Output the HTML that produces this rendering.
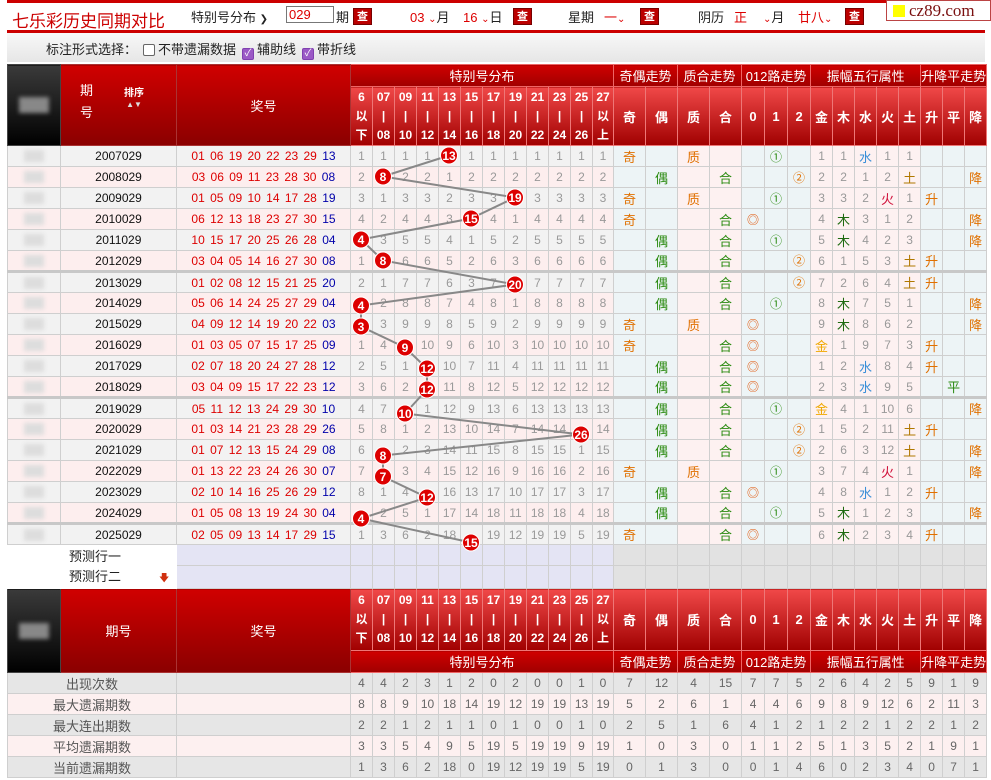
<!DOCTYPE html>
<html><head><meta charset="utf-8">
<style>
*{box-sizing:border-box}
body{margin:0;width:991px;height:780px;overflow:hidden;background:#fff;font-family:"Liberation Sans","Noto Sans CJK SC",sans-serif;font-size:12px;position:relative}
.topline{position:absolute;left:7px;top:0;width:978px;height:3px;background:#c00}
.title{position:absolute;left:12px;top:7px;font-size:17px;color:#c00;font-family:"Liberation Sans","Noto Sans CJK SC",sans-serif}
.redbar{position:absolute;left:7px;top:30px;width:978px;height:3px;background:#c00}
.opt{position:absolute;left:7px;top:33px;width:978px;height:29px;background:linear-gradient(#f8f8f8,#e6e6e6);font-size:13px;color:#222}
.ctl{position:absolute;top:7px;font-size:13px;color:#222;white-space:nowrap}
.red{color:#d00}
.btn{position:absolute;top:8px;width:19px;height:17px;background:#b00;color:#fff;font-size:11px;text-align:center;line-height:17px;font-weight:bold;border:1px solid #700}
.inp{position:absolute;left:286px;top:6px;width:48px;height:17px;border:1px solid #777;color:#d00;font-size:13px;padding-left:2px;line-height:15px}
.logo{position:absolute;left:886px;top:0;width:105px;height:21px;border:1px solid #b44;background:#fff;font-family:"Liberation Serif",serif;font-size:17px;color:#7a1010;line-height:19px;padding-left:22px}
.logo i{position:absolute;left:6px;top:4px;width:12px;height:12px;background:#ff0}
.cb{display:inline-block;width:12px;height:12px;border:1px solid #666;border-radius:2px;vertical-align:-2px;margin:0 3px 0 6px;background:#fff}
.cb.on{background:#9b59c6;border-color:#8040b0;color:#fff;font-size:10px;line-height:10px;text-align:center}
table{position:absolute;left:7px;border-collapse:collapse;table-layout:fixed;width:978px}
td{border:1px solid #cfcfcf;padding:0;text-align:center;white-space:nowrap;overflow:hidden;height:21px;color:#999}
.hd{background:linear-gradient(#d00000,#8a0000);color:#fff;font-size:13px;border-color:#a33}
.blk{background:linear-gradient(#3a3a3a,#000);border-color:#444}
.blk i{display:block;width:30px;height:16px;margin:0 auto;background:#888;filter:blur(2px)}
.g{background:linear-gradient(#d00000,#a00000);color:#fff;font-size:13px;border-color:#e66;height:22px}
.lb{background:linear-gradient(#f04848,#a00000);color:#fff;font-weight:bold;font-size:12px;border-color:#e77;line-height:19px}
.lb2{background:linear-gradient(#f04848,#a00000);color:#fff;font-weight:bold;font-size:13px;border-color:#e77}
tr.o td{background:#f2f2f2}
tr.e td{background:#fdeeee}
tr.o td.b,tr.e td.b{background:#edf4f6}
tr.o td.p,tr.e td.p{background:#fdf1f1}
td.L i{display:block;width:20px;height:12px;margin:0 auto;background:#ddd;filter:blur(2px)}
td.n{color:#111}
td.z{color:#d00;word-spacing:2px}
td.z b{font-weight:normal;color:#00a}
tr.s td{border-top:3px solid #c8c8c8}
.q{color:#e07000;font-size:13px}
.ou{color:#2a8a10;font-size:13px}
.c1{color:#2a8a10}
.c2{color:#e07000}
.c0{color:#e05000}
.jin{color:#f0a800;font-size:13px}
.mu{color:#1e6a10;font-size:13px}
.shui{color:#3a8fd8;font-size:13px}
.huo{color:#d0103a;font-size:13px}
.tu{color:#b07800;font-size:13px}
.sh{color:#e07000;font-size:13px}
.pi{color:#2a8a10;font-size:13px}
tr.pr td{background:#e4e4f4}
tr.pr td.w{background:#fff;border-color:#fff;text-align:left;padding-left:61px;color:#222;font-size:13px}
tr.pr td.gy{background:#e2e2e2}
tr.st td{color:#666}
tr.st td.t{font-size:13px;color:#555}
tr.s1 td{background:#e6e6e6}
tr.s2 td{background:#fdf0f0}
</style></head><body>
<div class="topline"></div>
<div class="title">七乐彩历史同期对比</div>
<div class="ctl" style="left:191px">特别号分布 <span style="font-size:10px">&#10095;</span></div>
<div class="inp">029</div>
<div class="ctl" style="left:336px">期</div>
<div class="btn" style="left:353px">查</div>
<div class="ctl red" style="left:410px">03 <span style="font-size:10px">&#8964;</span><span style="color:#222">月</span></div>
<div class="ctl red" style="left:463px">16 <span style="font-size:10px">&#8964;</span><span style="color:#222">日</span></div>
<div class="btn" style="left:513px">查</div>
<div class="ctl" style="left:568px">星期</div>
<div class="ctl red" style="left:604px">一<span style="font-size:10px">&#8964;</span></div>
<div class="btn" style="left:640px">查</div>
<div class="ctl" style="left:698px">阴历</div>
<div class="ctl red" style="left:734px">正</div>
<div class="ctl" style="left:763px"><span class="red" style="font-size:10px">&#8964;</span>月</div>
<div class="ctl red" style="left:798px">廿八<span style="font-size:10px">&#8964;</span></div>
<div class="btn" style="left:845px">查</div>
<div class="logo"><i></i>cz89.com</div>
<div class="redbar"></div>
<div class="opt"><div style="position:absolute;left:39px;top:6px">标注形式选择：<span class="cb"></span>不带遗漏数据<span class="cb on">&#10003;</span>辅助线<span class="cb on">&#10003;</span>带折线</div></div>

<table style="top:64px">
<colgroup><col style="width:53px"><col style="width:116px"><col style="width:174px"><col style="width:22px"><col style="width:22px"><col style="width:22px"><col style="width:22px"><col style="width:22px"><col style="width:22px"><col style="width:22px"><col style="width:22px"><col style="width:22px"><col style="width:22px"><col style="width:22px"><col style="width:21px"><col style="width:32px"><col style="width:32px"><col style="width:32px"><col style="width:32px"><col style="width:23px"><col style="width:23px"><col style="width:23px"><col style="width:22px"><col style="width:22px"><col style="width:22px"><col style="width:22px"><col style="width:22px"><col style="width:22px"><col style="width:22px"><col style="width:22px"></colgroup>
<tr><td rowspan="2" class="blk"><i></i></td><td rowspan="2" class="hd"><div style="position:relative;height:50px"><span style="position:absolute;left:19px;top:0;line-height:22px">期<br>号</span><span style="position:absolute;left:63px;top:4px;font-size:10px;font-weight:bold">排序<br><span style="font-size:8px;color:#ddd">&#9650;&#9660;</span></span></div></td><td rowspan="2" class="hd">奖号</td><td colspan="12" class="g">特别号分布</td><td colspan="2" class="g">奇偶走势</td><td colspan="2" class="g">质合走势</td><td colspan="3" class="g">012路走势</td><td colspan="5" class="g">振幅五行属性</td><td colspan="3" class="g">升降平走势</td></tr>
<tr style="height:59px"><td class="lb">6<br>以<br>下</td><td class="lb">07<br>|<br>08</td><td class="lb">09<br>|<br>10</td><td class="lb">11<br>|<br>12</td><td class="lb">13<br>|<br>14</td><td class="lb">15<br>|<br>16</td><td class="lb">17<br>|<br>18</td><td class="lb">19<br>|<br>20</td><td class="lb">21<br>|<br>22</td><td class="lb">23<br>|<br>24</td><td class="lb">25<br>|<br>26</td><td class="lb">27<br>以<br>上</td><td class="lb2">奇</td><td class="lb2">偶</td><td class="lb2">质</td><td class="lb2">合</td><td class="lb2">0</td><td class="lb2">1</td><td class="lb2">2</td><td class="lb2">金</td><td class="lb2">木</td><td class="lb2">水</td><td class="lb2">火</td><td class="lb2">土</td><td class="lb2">升</td><td class="lb2">平</td><td class="lb2">降</td></tr>

<tr class="o"><td class="L"><i></i></td><td class="n">2007029</td><td class="z">01 06 19 20 22 23 29 <b>13</b></td><td>1</td><td>1</td><td>1</td><td>1</td><td></td><td>1</td><td>1</td><td>1</td><td>1</td><td>1</td><td>1</td><td>1</td><td class="b q">奇</td><td class="b"></td><td class="p q">质</td><td class="p"></td><td class="b"></td><td class="b c1">①</td><td class="b"></td><td class="p">1</td><td class="p">1</td><td class="p shui">水</td><td class="p">1</td><td class="p">1</td><td class="b"></td><td class="b"></td><td class="b"></td></tr>
<tr class="e"><td class="L"><i></i></td><td class="n">2008029</td><td class="z">03 06 09 11 23 28 30 <b>08</b></td><td>2</td><td></td><td>2</td><td>2</td><td>1</td><td>2</td><td>2</td><td>2</td><td>2</td><td>2</td><td>2</td><td>2</td><td class="b"></td><td class="b ou">偶</td><td class="p"></td><td class="p ou">合</td><td class="b"></td><td class="b"></td><td class="b c2">②</td><td class="p">2</td><td class="p">2</td><td class="p">1</td><td class="p">2</td><td class="p tu">土</td><td class="b"></td><td class="b"></td><td class="b sh">降</td></tr>
<tr class="o"><td class="L"><i></i></td><td class="n">2009029</td><td class="z">01 05 09 10 14 17 28 <b>19</b></td><td>3</td><td>1</td><td>3</td><td>3</td><td>2</td><td>3</td><td>3</td><td></td><td>3</td><td>3</td><td>3</td><td>3</td><td class="b q">奇</td><td class="b"></td><td class="p q">质</td><td class="p"></td><td class="b"></td><td class="b c1">①</td><td class="b"></td><td class="p">3</td><td class="p">3</td><td class="p">2</td><td class="p huo">火</td><td class="p">1</td><td class="b sh">升</td><td class="b"></td><td class="b"></td></tr>
<tr class="e"><td class="L"><i></i></td><td class="n">2010029</td><td class="z">06 12 13 18 23 27 30 <b>15</b></td><td>4</td><td>2</td><td>4</td><td>4</td><td>3</td><td></td><td>4</td><td>1</td><td>4</td><td>4</td><td>4</td><td>4</td><td class="b q">奇</td><td class="b"></td><td class="p"></td><td class="p ou">合</td><td class="b c0">◎</td><td class="b"></td><td class="b"></td><td class="p">4</td><td class="p mu">木</td><td class="p">3</td><td class="p">1</td><td class="p">2</td><td class="b"></td><td class="b"></td><td class="b sh">降</td></tr>
<tr class="o"><td class="L"><i></i></td><td class="n">2011029</td><td class="z">10 15 17 20 25 26 28 <b>04</b></td><td></td><td>3</td><td>5</td><td>5</td><td>4</td><td>1</td><td>5</td><td>2</td><td>5</td><td>5</td><td>5</td><td>5</td><td class="b"></td><td class="b ou">偶</td><td class="p"></td><td class="p ou">合</td><td class="b"></td><td class="b c1">①</td><td class="b"></td><td class="p">5</td><td class="p mu">木</td><td class="p">4</td><td class="p">2</td><td class="p">3</td><td class="b"></td><td class="b"></td><td class="b sh">降</td></tr>
<tr class="e"><td class="L"><i></i></td><td class="n">2012029</td><td class="z">03 04 05 14 16 27 30 <b>08</b></td><td>1</td><td></td><td>6</td><td>6</td><td>5</td><td>2</td><td>6</td><td>3</td><td>6</td><td>6</td><td>6</td><td>6</td><td class="b"></td><td class="b ou">偶</td><td class="p"></td><td class="p ou">合</td><td class="b"></td><td class="b"></td><td class="b c2">②</td><td class="p">6</td><td class="p">1</td><td class="p">5</td><td class="p">3</td><td class="p tu">土</td><td class="b sh">升</td><td class="b"></td><td class="b"></td></tr>
<tr class="o s"><td class="L"><i></i></td><td class="n">2013029</td><td class="z">01 02 08 12 15 21 25 <b>20</b></td><td>2</td><td>1</td><td>7</td><td>7</td><td>6</td><td>3</td><td>7</td><td></td><td>7</td><td>7</td><td>7</td><td>7</td><td class="b"></td><td class="b ou">偶</td><td class="p"></td><td class="p ou">合</td><td class="b"></td><td class="b"></td><td class="b c2">②</td><td class="p">7</td><td class="p">2</td><td class="p">6</td><td class="p">4</td><td class="p tu">土</td><td class="b sh">升</td><td class="b"></td><td class="b"></td></tr>
<tr class="e"><td class="L"><i></i></td><td class="n">2014029</td><td class="z">05 06 14 24 25 27 29 <b>04</b></td><td></td><td>2</td><td>8</td><td>8</td><td>7</td><td>4</td><td>8</td><td>1</td><td>8</td><td>8</td><td>8</td><td>8</td><td class="b"></td><td class="b ou">偶</td><td class="p"></td><td class="p ou">合</td><td class="b"></td><td class="b c1">①</td><td class="b"></td><td class="p">8</td><td class="p mu">木</td><td class="p">7</td><td class="p">5</td><td class="p">1</td><td class="b"></td><td class="b"></td><td class="b sh">降</td></tr>
<tr class="o"><td class="L"><i></i></td><td class="n">2015029</td><td class="z">04 09 12 14 19 20 22 <b>03</b></td><td></td><td>3</td><td>9</td><td>9</td><td>8</td><td>5</td><td>9</td><td>2</td><td>9</td><td>9</td><td>9</td><td>9</td><td class="b q">奇</td><td class="b"></td><td class="p q">质</td><td class="p"></td><td class="b c0">◎</td><td class="b"></td><td class="b"></td><td class="p">9</td><td class="p mu">木</td><td class="p">8</td><td class="p">6</td><td class="p">2</td><td class="b"></td><td class="b"></td><td class="b sh">降</td></tr>
<tr class="e"><td class="L"><i></i></td><td class="n">2016029</td><td class="z">01 03 05 07 15 17 25 <b>09</b></td><td>1</td><td>4</td><td></td><td>10</td><td>9</td><td>6</td><td>10</td><td>3</td><td>10</td><td>10</td><td>10</td><td>10</td><td class="b q">奇</td><td class="b"></td><td class="p"></td><td class="p ou">合</td><td class="b c0">◎</td><td class="b"></td><td class="b"></td><td class="p jin">金</td><td class="p">1</td><td class="p">9</td><td class="p">7</td><td class="p">3</td><td class="b sh">升</td><td class="b"></td><td class="b"></td></tr>
<tr class="o"><td class="L"><i></i></td><td class="n">2017029</td><td class="z">02 07 18 20 24 27 28 <b>12</b></td><td>2</td><td>5</td><td>1</td><td></td><td>10</td><td>7</td><td>11</td><td>4</td><td>11</td><td>11</td><td>11</td><td>11</td><td class="b"></td><td class="b ou">偶</td><td class="p"></td><td class="p ou">合</td><td class="b c0">◎</td><td class="b"></td><td class="b"></td><td class="p">1</td><td class="p">2</td><td class="p shui">水</td><td class="p">8</td><td class="p">4</td><td class="b sh">升</td><td class="b"></td><td class="b"></td></tr>
<tr class="e"><td class="L"><i></i></td><td class="n">2018029</td><td class="z">03 04 09 15 17 22 23 <b>12</b></td><td>3</td><td>6</td><td>2</td><td></td><td>11</td><td>8</td><td>12</td><td>5</td><td>12</td><td>12</td><td>12</td><td>12</td><td class="b"></td><td class="b ou">偶</td><td class="p"></td><td class="p ou">合</td><td class="b c0">◎</td><td class="b"></td><td class="b"></td><td class="p">2</td><td class="p">3</td><td class="p shui">水</td><td class="p">9</td><td class="p">5</td><td class="b"></td><td class="b pi">平</td><td class="b"></td></tr>
<tr class="o s"><td class="L"><i></i></td><td class="n">2019029</td><td class="z">05 11 12 13 24 29 30 <b>10</b></td><td>4</td><td>7</td><td></td><td>1</td><td>12</td><td>9</td><td>13</td><td>6</td><td>13</td><td>13</td><td>13</td><td>13</td><td class="b"></td><td class="b ou">偶</td><td class="p"></td><td class="p ou">合</td><td class="b"></td><td class="b c1">①</td><td class="b"></td><td class="p jin">金</td><td class="p">4</td><td class="p">1</td><td class="p">10</td><td class="p">6</td><td class="b"></td><td class="b"></td><td class="b sh">降</td></tr>
<tr class="e"><td class="L"><i></i></td><td class="n">2020029</td><td class="z">01 03 14 21 23 28 29 <b>26</b></td><td>5</td><td>8</td><td>1</td><td>2</td><td>13</td><td>10</td><td>14</td><td>7</td><td>14</td><td>14</td><td></td><td>14</td><td class="b"></td><td class="b ou">偶</td><td class="p"></td><td class="p ou">合</td><td class="b"></td><td class="b"></td><td class="b c2">②</td><td class="p">1</td><td class="p">5</td><td class="p">2</td><td class="p">11</td><td class="p tu">土</td><td class="b sh">升</td><td class="b"></td><td class="b"></td></tr>
<tr class="o"><td class="L"><i></i></td><td class="n">2021029</td><td class="z">01 07 12 13 15 24 29 <b>08</b></td><td>6</td><td></td><td>2</td><td>3</td><td>14</td><td>11</td><td>15</td><td>8</td><td>15</td><td>15</td><td>1</td><td>15</td><td class="b"></td><td class="b ou">偶</td><td class="p"></td><td class="p ou">合</td><td class="b"></td><td class="b"></td><td class="b c2">②</td><td class="p">2</td><td class="p">6</td><td class="p">3</td><td class="p">12</td><td class="p tu">土</td><td class="b"></td><td class="b"></td><td class="b sh">降</td></tr>
<tr class="e"><td class="L"><i></i></td><td class="n">2022029</td><td class="z">01 13 22 23 24 26 30 <b>07</b></td><td>7</td><td></td><td>3</td><td>4</td><td>15</td><td>12</td><td>16</td><td>9</td><td>16</td><td>16</td><td>2</td><td>16</td><td class="b q">奇</td><td class="b"></td><td class="p q">质</td><td class="p"></td><td class="b"></td><td class="b c1">①</td><td class="b"></td><td class="p">3</td><td class="p">7</td><td class="p">4</td><td class="p huo">火</td><td class="p">1</td><td class="b"></td><td class="b"></td><td class="b sh">降</td></tr>
<tr class="o"><td class="L"><i></i></td><td class="n">2023029</td><td class="z">02 10 14 16 25 26 29 <b>12</b></td><td>8</td><td>1</td><td>4</td><td></td><td>16</td><td>13</td><td>17</td><td>10</td><td>17</td><td>17</td><td>3</td><td>17</td><td class="b"></td><td class="b ou">偶</td><td class="p"></td><td class="p ou">合</td><td class="b c0">◎</td><td class="b"></td><td class="b"></td><td class="p">4</td><td class="p">8</td><td class="p shui">水</td><td class="p">1</td><td class="p">2</td><td class="b sh">升</td><td class="b"></td><td class="b"></td></tr>
<tr class="e"><td class="L"><i></i></td><td class="n">2024029</td><td class="z">01 05 08 13 19 24 30 <b>04</b></td><td></td><td>2</td><td>5</td><td>1</td><td>17</td><td>14</td><td>18</td><td>11</td><td>18</td><td>18</td><td>4</td><td>18</td><td class="b"></td><td class="b ou">偶</td><td class="p"></td><td class="p ou">合</td><td class="b"></td><td class="b c1">①</td><td class="b"></td><td class="p">5</td><td class="p mu">木</td><td class="p">1</td><td class="p">2</td><td class="p">3</td><td class="b"></td><td class="b"></td><td class="b sh">降</td></tr>
<tr class="o s"><td class="L"><i></i></td><td class="n">2025029</td><td class="z">02 05 09 13 14 17 29 <b>15</b></td><td>1</td><td>3</td><td>6</td><td>2</td><td>18</td><td></td><td>19</td><td>12</td><td>19</td><td>19</td><td>5</td><td>19</td><td class="b q">奇</td><td class="b"></td><td class="p"></td><td class="p ou">合</td><td class="b c0">◎</td><td class="b"></td><td class="b"></td><td class="p">6</td><td class="p mu">木</td><td class="p">2</td><td class="p">3</td><td class="p">4</td><td class="b sh">升</td><td class="b"></td><td class="b"></td></tr>
<tr class="pr"><td class="w" colspan="2">预测行一</td><td></td><td></td><td></td><td></td><td></td><td></td><td></td><td></td><td></td><td></td><td></td><td></td><td></td><td class="gy"></td><td class="gy"></td><td class="gy"></td><td class="gy"></td><td class="gy"></td><td class="gy"></td><td class="gy"></td><td class="gy"></td><td class="gy"></td><td class="gy"></td><td class="gy"></td><td class="gy"></td><td class="gy"></td><td class="gy"></td><td class="gy"></td></tr>
<tr class="pr"><td class="w" colspan="2">预测行二<span style="color:#d03010;font-size:10px;margin-left:38px">&#129095;</span></td><td></td><td></td><td></td><td></td><td></td><td></td><td></td><td></td><td></td><td></td><td></td><td></td><td></td><td class="gy"></td><td class="gy"></td><td class="gy"></td><td class="gy"></td><td class="gy"></td><td class="gy"></td><td class="gy"></td><td class="gy"></td><td class="gy"></td><td class="gy"></td><td class="gy"></td><td class="gy"></td><td class="gy"></td><td class="gy"></td><td class="gy"></td></tr>
<tr style="height:62px"><td rowspan="2" class="blk"><i></i></td><td rowspan="2" class="hd">期号</td><td rowspan="2" class="hd">奖号</td><td class="lb">6<br>以<br>下</td><td class="lb">07<br>|<br>08</td><td class="lb">09<br>|<br>10</td><td class="lb">11<br>|<br>12</td><td class="lb">13<br>|<br>14</td><td class="lb">15<br>|<br>16</td><td class="lb">17<br>|<br>18</td><td class="lb">19<br>|<br>20</td><td class="lb">21<br>|<br>22</td><td class="lb">23<br>|<br>24</td><td class="lb">25<br>|<br>26</td><td class="lb">27<br>以<br>上</td><td class="lb2">奇</td><td class="lb2">偶</td><td class="lb2">质</td><td class="lb2">合</td><td class="lb2">0</td><td class="lb2">1</td><td class="lb2">2</td><td class="lb2">金</td><td class="lb2">木</td><td class="lb2">水</td><td class="lb2">火</td><td class="lb2">土</td><td class="lb2">升</td><td class="lb2">平</td><td class="lb2">降</td></tr>
<tr><td colspan="12" class="g" style="height:20px">特别号分布</td><td colspan="2" class="g">奇偶走势</td><td colspan="2" class="g">质合走势</td><td colspan="3" class="g">012路走势</td><td colspan="5" class="g">振幅五行属性</td><td colspan="3" class="g">升降平走势</td></tr>
<tr class="st s1"><td colspan="2" class="t">出现次数</td><td></td><td>4</td><td>4</td><td>2</td><td>3</td><td>1</td><td>2</td><td>0</td><td>2</td><td>0</td><td>0</td><td>1</td><td>0</td><td>7</td><td>12</td><td>4</td><td>15</td><td>7</td><td>7</td><td>5</td><td>2</td><td>6</td><td>4</td><td>2</td><td>5</td><td>9</td><td>1</td><td>9</td></tr>
<tr class="st s2"><td colspan="2" class="t">最大遗漏期数</td><td></td><td>8</td><td>8</td><td>9</td><td>10</td><td>18</td><td>14</td><td>19</td><td>12</td><td>19</td><td>19</td><td>13</td><td>19</td><td>5</td><td>2</td><td>6</td><td>1</td><td>4</td><td>4</td><td>6</td><td>9</td><td>8</td><td>9</td><td>12</td><td>6</td><td>2</td><td>11</td><td>3</td></tr>
<tr class="st s1"><td colspan="2" class="t">最大连出期数</td><td></td><td>2</td><td>2</td><td>1</td><td>2</td><td>1</td><td>1</td><td>0</td><td>1</td><td>0</td><td>0</td><td>1</td><td>0</td><td>2</td><td>5</td><td>1</td><td>6</td><td>4</td><td>1</td><td>2</td><td>1</td><td>2</td><td>2</td><td>1</td><td>2</td><td>2</td><td>1</td><td>2</td></tr>
<tr class="st s2"><td colspan="2" class="t">平均遗漏期数</td><td></td><td>3</td><td>3</td><td>5</td><td>4</td><td>9</td><td>5</td><td>19</td><td>5</td><td>19</td><td>19</td><td>9</td><td>19</td><td>1</td><td>0</td><td>3</td><td>0</td><td>1</td><td>1</td><td>2</td><td>5</td><td>1</td><td>3</td><td>5</td><td>2</td><td>1</td><td>9</td><td>1</td></tr>
<tr class="st s1"><td colspan="2" class="t">当前遗漏期数</td><td></td><td>1</td><td>3</td><td>6</td><td>2</td><td>18</td><td>0</td><td>19</td><td>12</td><td>19</td><td>19</td><td>5</td><td>19</td><td>0</td><td>1</td><td>3</td><td>0</td><td>0</td><td>1</td><td>4</td><td>6</td><td>0</td><td>2</td><td>3</td><td>4</td><td>0</td><td>7</td><td>1</td></tr>
</table>

<svg style="position:absolute;left:0;top:0" width="991" height="780" font-family="Liberation Sans, sans-serif">
<polyline fill="none" stroke="#888" stroke-width="2" points="449,155.5 383,176.5 515,197.5 471,218.5 361,239.5 383,260.5 515,284.5 361,305.5 361,326.5 405,347.5 427,368.5 427,389.5 405,413.5 581,434.5 383,455.5 383,476.5 427,497.5 361,518.5 471,542.5"/>
<g fill="#d00" stroke="#fff" stroke-width="1">
<circle cx="449" cy="155.5" r="8.5"/><circle cx="383" cy="176.5" r="8.5"/><circle cx="515" cy="197.5" r="8.5"/><circle cx="471" cy="218.5" r="8.5"/><circle cx="361" cy="239.5" r="8.5"/><circle cx="383" cy="260.5" r="8.5"/><circle cx="515" cy="284.5" r="8.5"/><circle cx="361" cy="305.5" r="8.5"/><circle cx="361" cy="326.5" r="8.5"/><circle cx="405" cy="347.5" r="8.5"/><circle cx="427" cy="368.5" r="8.5"/><circle cx="427" cy="389.5" r="8.5"/><circle cx="405" cy="413.5" r="8.5"/><circle cx="581" cy="434.5" r="8.5"/><circle cx="383" cy="455.5" r="8.5"/><circle cx="383" cy="476.5" r="8.5"/><circle cx="427" cy="497.5" r="8.5"/><circle cx="361" cy="518.5" r="8.5"/><circle cx="471" cy="542.5" r="8.5"/>
</g>
<g fill="#fff" font-size="12" font-weight="bold" text-anchor="middle">
<text x="449" y="160">13</text><text x="383" y="181">8</text><text x="515" y="202">19</text><text x="471" y="223">15</text><text x="361" y="244">4</text><text x="383" y="265">8</text><text x="515" y="289">20</text><text x="361" y="310">4</text><text x="361" y="331">3</text><text x="405" y="352">9</text><text x="427" y="373">12</text><text x="427" y="394">12</text><text x="405" y="418">10</text><text x="581" y="439">26</text><text x="383" y="460">8</text><text x="383" y="481">7</text><text x="427" y="502">12</text><text x="361" y="523">4</text><text x="471" y="547">15</text>
</g>
</svg>
</body></html>
